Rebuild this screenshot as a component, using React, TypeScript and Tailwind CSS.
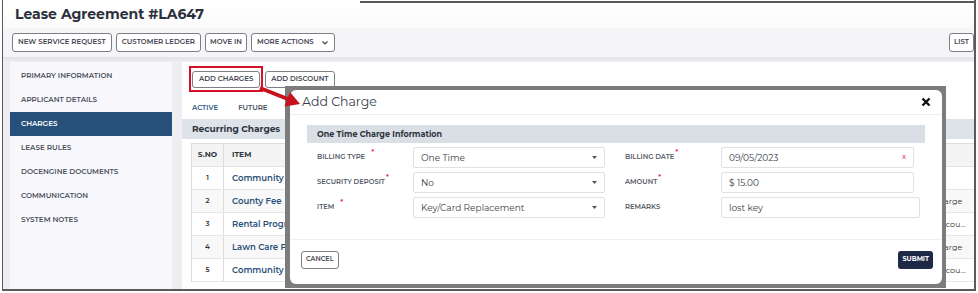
import React from "react";

const F = "font-['Montserrat','Inter',sans-serif]";

function Btn({ children, px = "px-[5px]" }: { children: React.ReactNode; px?: string }) {
  return (
    <div className={`h-[19px] ${px} flex items-center border border-[#7d7f86] rounded-[3px] bg-white text-[7px] font-semibold text-[#3f4350] whitespace-nowrap`}>
      {children}
    </div>
  );
}

function Req() {
  return <span className="text-[#e0243a] text-[7px] relative top-[-4px] ml-[1px]">*</span>;
}

function Caret() {
  return (
    <svg width="5" height="3" viewBox="0 0 5 3" className="ml-auto">
      <polygon points="0,0 5,0 2.5,3" fill="#555" />
    </svg>
  );
}

function Label({ text, req, space }: { text: string; req?: boolean; space?: boolean }) {
  return (
    <div className="flex items-center text-[6.8px] font-semibold text-[#555a66] whitespace-nowrap">
      {text}
      {req && (space ? <span className="ml-[5px]"><Req /></span> : <Req />)}
    </div>
  );
}

function Field({ children, w = "w-[192px]", caret, clear }: { children: React.ReactNode; w?: string; caret?: boolean; clear?: boolean }) {
  return (
    <div className={`${w} h-[21px] border border-[#dfe1e5] rounded-[2px] bg-white flex items-center pl-[7px] pr-[7px] text-[9px] text-[#3a3d45]`}>
      <span>{children}</span>
      {caret && <Caret />}
      {clear && <span className="ml-auto text-[#e0628a] text-[7px] font-semibold">x</span>}
    </div>
  );
}

const rows = [
  { n: "1", item: "Community Services", t: "" },
  { n: "2", item: "County Fee", t: "Charge" },
  { n: "3", item: "Rental Program", t: "Discou..." },
  { n: "4", item: "Lawn Care Program", t: "Charge" },
  { n: "5", item: "Community Services", t: "Discou..." },
];

const menu = [
  "PRIMARY INFORMATION",
  "APPLICANT DETAILS",
  "CHARGES",
  "LEASE RULES",
  "DOCENGINE DOCUMENTS",
  "COMMUNICATION",
  "SYSTEM NOTES",
];

export default function App() {
  return (
    <div className={`w-[978px] h-[293px] bg-white relative overflow-hidden ${F}`}>
      <div className="absolute left-[360px] top-[1px] w-[616px] h-[2px] bg-[#5a5a5a]" />
      <div className="ml-[2px] w-[974px] h-[291px] border-l border-r-[2px] border-b-[2px] border-[#5a5a5a] flex flex-col">
        {/* title */}
        <div className="h-[28px] flex items-center pl-[12px] text-[14px] font-bold text-[#2b303c] bg-gradient-to-b from-white to-[#fafafa]">
          Lease Agreement #LA647
        </div>
        {/* toolbar */}
        <div className="h-[29px] bg-[#f5f5f7] flex items-center pl-[9px] pr-0 gap-[4px]">
          <Btn>NEW SERVICE REQUEST</Btn>
          <Btn>CUSTOMER LEDGER</Btn>
          <Btn px="px-[4px]">MOVE IN</Btn>
          <Btn>
            MORE ACTIONS
            <svg width="6" height="4" viewBox="0 0 6 4" className="ml-[8px] mr-[1px]">
              <polyline points="0.5,0.5 3,3 5.5,0.5" fill="none" stroke="#444" strokeWidth="1.2" />
            </svg>
          </Btn>
          <div className="ml-auto">
            <Btn px="px-[4px]">LIST</Btn>
          </div>
        </div>
        <div className="h-[5px] bg-gradient-to-b from-[#e2e2e6] to-[#eeeef2]" />
        {/* body */}
        <div className="flex-1 flex bg-[#eeeef2]">
          <div className="ml-[7px] w-[162px] bg-[#f8f8fc] pt-[2px]">
            {menu.map((m) => (
              <div
                key={m}
                className={`h-[24px] flex items-center pl-[11px] text-[7.2px] font-semibold ${
                  m === "CHARGES" ? "bg-[#26507a] text-white" : "text-[#4b4f5a]"
                }`}
              >
                {m}
              </div>
            ))}
          </div>
          <div className="ml-[10px] flex-1 bg-white flex flex-col">
            <div className="pt-[9px] pl-[10px] flex gap-[5px]">
              <div className="h-[17px] px-[6px] flex items-center border border-[#7d7f86] rounded-[3px] text-[7px] font-semibold text-[#3f4350]">ADD CHARGES</div>
              <div className="h-[17px] px-[5px] flex items-center border border-[#7d7f86] rounded-[3px] text-[7px] font-semibold text-[#3f4350]">ADD DISCOUNT</div>
            </div>
            <div className="mt-[10px] h-[21px] flex items-center text-[7px] font-semibold">
              <div className="h-full flex items-center px-[10px] text-[#2c5a86]">ACTIVE</div>
              <div className="h-full flex items-center px-[10px] text-[#4b4f5a]">FUTURE</div>
            </div>
            <div className="h-[20px] bg-[#dde3e9] flex items-center pl-[10px] text-[9px] font-bold text-[#2f3440]">
              Recurring Charges
            </div>
            <div className="mt-[4px] ml-[9px] border-l border-t border-[#dcdcdc]">
              <div className="h-[23px] flex bg-[#f4f4f4] border-b border-[#e3e3e3] text-[7.5px] font-bold text-[#2f3440]">
                <div className="w-[32px] border-r border-[#dcdcdc] flex items-center justify-center">S.NO</div>
                <div className="pl-[8px] flex items-center">ITEM</div>
              </div>
              {rows.map((r, i) => (
                <div key={r.n} className={`h-[23px] flex border-b border-[#e6e6e6] ${i % 2 === 1 ? "bg-[#f8f8f8]" : "bg-white"}`}>
                  <div className="w-[32px] border-r border-[#dcdcdc] flex items-center justify-center text-[7px] font-semibold text-[#333]">{r.n}</div>
                  <div className="w-[705px] pl-[8px] flex items-center text-[8.5px] font-semibold text-[#2b5079] whitespace-nowrap">{r.item}</div>
                  <div className="flex items-center pl-[4px] text-[8px] text-[#333] whitespace-nowrap">{r.t}</div>
                </div>
              ))}
            </div>
          </div>
        </div>
      </div>

      {/* red highlight box */}
      <div className="absolute left-[189px] top-[66px] w-[74px] h-[26px] border-2 border-[#d4102a]" />

      {/* clipped underlying tab text */}
      <div className="absolute left-[318px] top-[84px] h-[3px] overflow-hidden">
        <div className="flex gap-[30px] text-[7px] font-semibold text-[#8a8d96] leading-[10px]">
          <span>ACTIVE</span>
          <span>FUTURE</span>
          <span>HISTORY</span>
        </div>
      </div>

      {/* modal */}
      <div className="absolute left-[285px] top-[86px] w-[661px] h-[202px] bg-[#7c7c7c] pl-[5px] pt-[4px] pr-[4px] pb-[4px]">
        <div className="w-full h-full bg-white rounded-[6px] flex flex-col">
          <div className="h-[25px] flex items-center pl-[12px] pr-[11px] border-b border-[#ececec]">
            <span className="text-[12.5px] text-[#3b3e4a]">Add Charge</span>
            <svg width="10" height="10" viewBox="0 0 10 10" className="ml-auto">
              <path d="M1.5 1.5 L8.5 8.5 M8.5 1.5 L1.5 8.5" stroke="#111" strokeWidth="2.4" />
            </svg>
          </div>
          <div className="mt-[10px] mx-[17px] h-[18px] bg-[#d9dfe5] flex items-center pl-[10px] text-[8px] font-bold text-[#2f3440]">
            One Time Charge Information
          </div>
          <div className="mt-[4px] ml-[27px] grid grid-cols-[96px_212px_96px_199px] gap-y-[4px] items-center">
            <Label text="BILLING TYPE" req space />
            <Field caret>One Time</Field>
            <Label text="BILLING DATE" req />
            <Field w="w-[193px]" clear>09/05/2023</Field>
            <Label text="SECURITY DEPOSIT" req />
            <Field caret>No</Field>
            <Label text="AMOUNT" req />
            <Field w="w-[193px]">$ 15.00</Field>
            <Label text="ITEM" req space />
            <Field caret>Key/Card Replacement</Field>
            <Label text="REMARKS" />
            <Field w="w-[199px]">lost key</Field>
          </div>
          <div className="mt-[21px] border-t border-[#efefef] flex items-center justify-between pl-[11px] pr-[9px] pt-[11px]">
            <div className="h-[18px] px-[4px] flex items-center border border-[#7d7f86] rounded-[3px] text-[6.5px] font-semibold text-[#3f4350]">CANCEL</div>
            <div className="h-[18px] px-[4px] flex items-center bg-[#1e2a45] rounded-[3px] text-[6.5px] font-bold text-white">SUBMIT</div>
          </div>
        </div>
      </div>

      {/* arrow */}
      <svg className="absolute left-[250px] top-[80px]" width="60" height="35" viewBox="250 80 60 35">
        <line x1="260" y1="88" x2="289" y2="99.5" stroke="#c8101e" strokeWidth="3.8" />
        <polygon points="300,104 284.5,106.5 290,92" fill="#c8101e" />
      </svg>
    </div>
  );
}
